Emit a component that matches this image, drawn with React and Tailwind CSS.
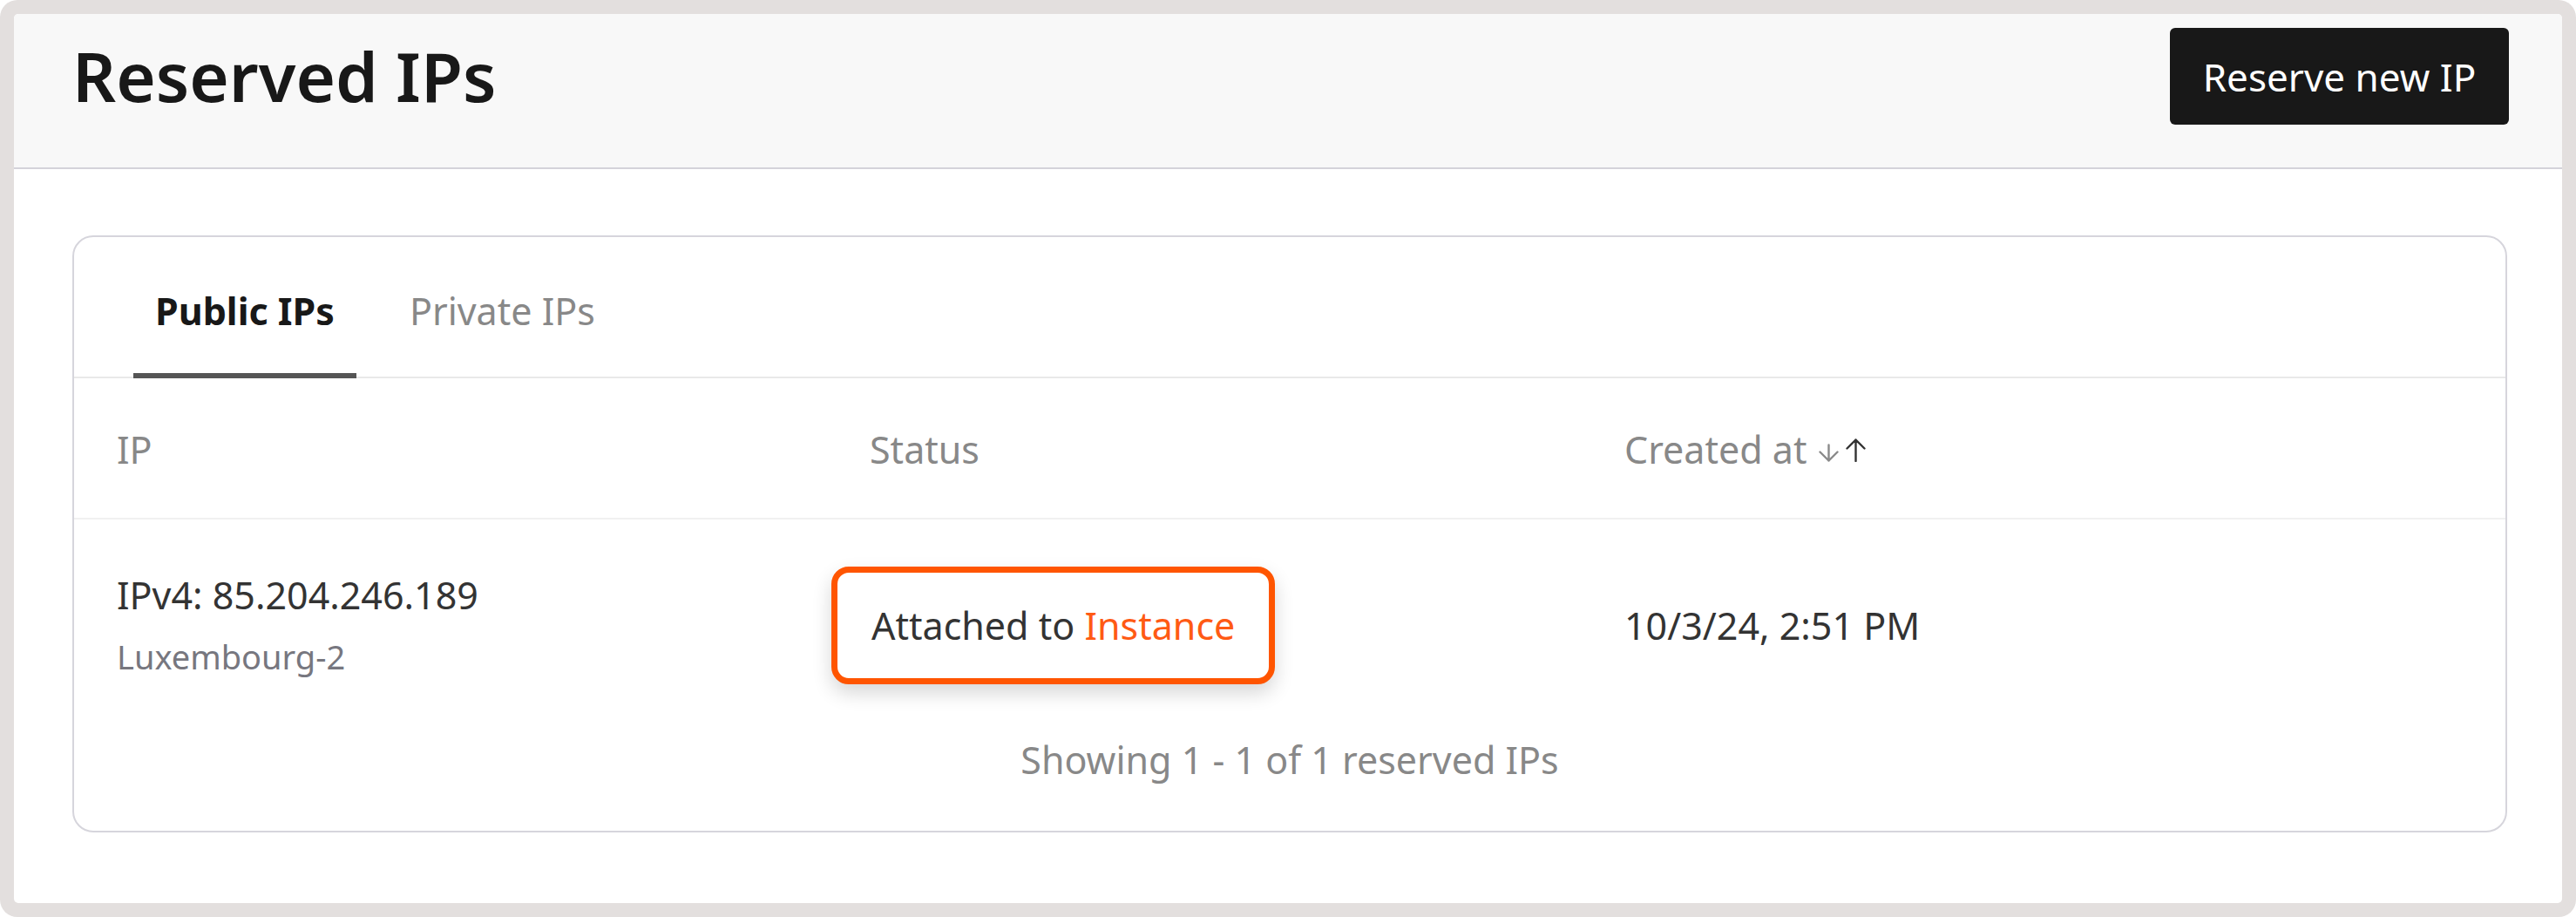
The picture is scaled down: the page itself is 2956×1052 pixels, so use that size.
import React, { useState } from 'react';

const reservedIps = [
  {
    id: 1,
    address: 'IPv4: 85.204.246.189',
    region: 'Luxembourg-2',
    createdAt: '10/3/24, 2:51 PM',
  },
];

const SortArrows = () => (
  <span className="ml-[12px] inline-flex items-end gap-[6px]">
    <svg width="25" height="21" viewBox="0 0 25 21" fill="none" stroke="#8a8a8a" strokeWidth="2.4" strokeLinecap="round" strokeLinejoin="round">
      <path d="M12.5 1.5v18M2.5 9.5l10 10 10-10" />
    </svg>
    <svg width="25" height="27" viewBox="0 0 25 27" fill="none" stroke="#333333" strokeWidth="2.4" strokeLinecap="round" strokeLinejoin="round">
      <path d="M12.5 26V1.5M2.5 11.5l10-10 10 10" />
    </svg>
  </span>
);

const App = () => {
  const [activeTab, setActiveTab] = useState('public');

  return (
    <div className="w-[2956px] h-[1052px] bg-white font-['Noto_Sans',sans-serif]">
      <div className="h-full rounded-[20px] bg-[#e3dfde] p-[16px]">
        <div className="h-full flex flex-col rounded-[5px] bg-white overflow-hidden">
          {/* Header */}
          <div className="h-[178px] flex justify-between items-start pt-[16px] pl-[67px] pr-[61px] bg-[#f8f8f8] border-b-2 border-[#d4d3da]">
            <h1 className="text-[78px] leading-[111px] font-semibold text-[#181818]">Reserved IPs</h1>
            <button className="w-[389px] h-[111px] rounded-[6px] bg-[#181818] text-white text-[44px] leading-none">
              Reserve new IP
            </button>
          </div>

          {/* Body */}
          <div className="flex-1 pt-[76px] pl-[67px] pr-[63px]">
            <div className="rounded-[24px] border-2 border-[#d6d5dc] bg-white">
              {/* Tabs */}
              <div className="flex gap-[36px] pl-[68px] pt-[57px] border-b-2 border-[#e9e9e9]">
                <button
                  onClick={() => setActiveTab('public')}
                  className={`-mb-[2px] px-[25px] pb-[43px] text-[43px] leading-[56px] border-b-[6px] ${
                    activeTab === 'public'
                      ? 'border-[#555555] font-bold text-[#181818]'
                      : 'border-transparent text-[#888888]'
                  }`}
                >
                  Public IPs
                </button>
                <button
                  onClick={() => setActiveTab('private')}
                  className={`-mb-[2px] px-[25px] pb-[43px] text-[43px] leading-[56px] border-b-[6px] ${
                    activeTab === 'private'
                      ? 'border-[#555555] font-bold text-[#181818]'
                      : 'border-transparent text-[#888888]'
                  }`}
                >
                  Private IPs
                </button>
              </div>

              {/* Table header */}
              <div className="grid grid-cols-[864px_866px_1fr] h-[162px] pl-[49px] pt-[54px] text-[43px] leading-[56px] text-[#888888] border-b-2 border-[#f1f1f1]">
                <div className="self-start">IP</div>
                <div className="self-start">Status</div>
                <div className="self-start flex items-center">
                  <span>Created at</span>
                  <SortArrows />
                </div>
              </div>

              {/* Rows */}
              {reservedIps.map((ip) => (
                <div key={ip.id} className="grid grid-cols-[864px_866px_1fr] h-[243px] items-center pl-[49px] text-[43px] leading-[56px] text-[#333333]">
                  <div className="-mt-[3px]">
                    <div>{ip.address}</div>
                    <div className="mt-[18px] text-[38px] leading-[48px] text-[#77777f]">{ip.region}</div>
                  </div>
                  <div>
                    <div className="-ml-[44px] inline-flex items-center h-[135px] px-[39px] rounded-[20px] border-[7px] border-[#ff5500] bg-white shadow-[0_10px_22px_rgba(0,0,0,0.16)]">
                      Attached to&nbsp;<span className="text-[#ff5a14]">Instance</span>
                    </div>
                  </div>
                  <div>{ip.createdAt}</div>
                </div>
              ))}

              {/* Footer */}
              <div className="pt-[5px] pb-[53px] text-center text-[43px] leading-[56px] text-[#888888]">
                Showing 1 - 1 of 1 reserved IPs
              </div>
            </div>
          </div>
        </div>
      </div>
    </div>
  );
};

export default App;
